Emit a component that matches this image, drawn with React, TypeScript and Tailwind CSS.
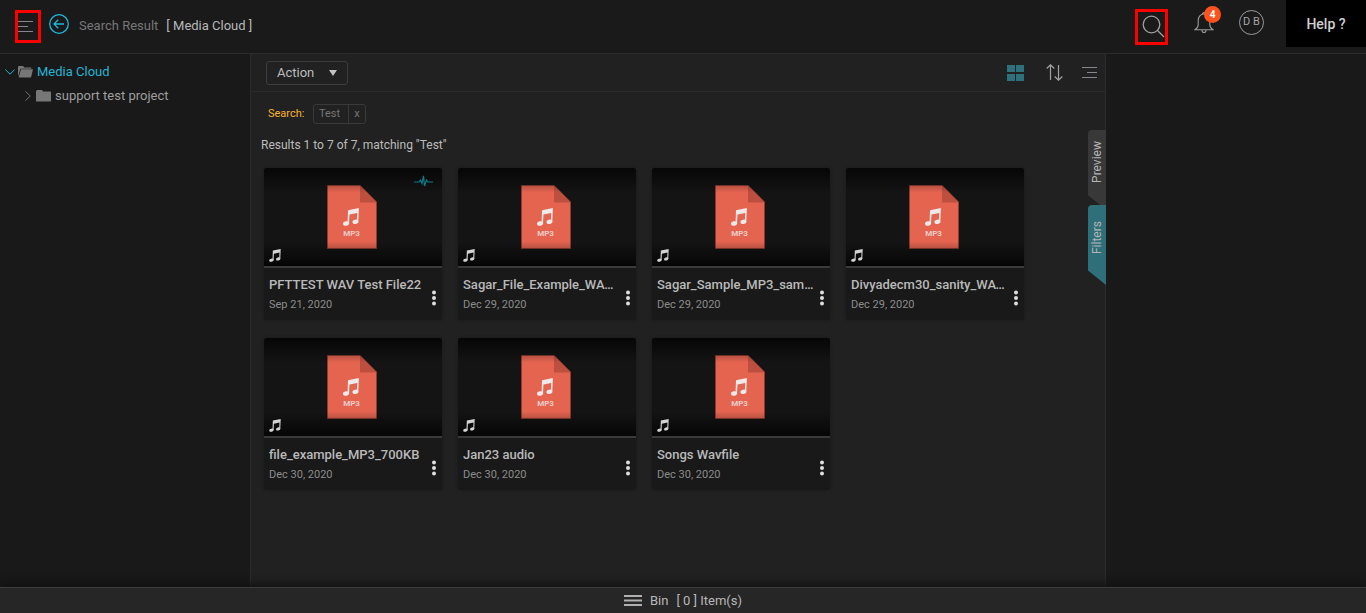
import React from 'react';

type Asset = { title: string; date: string; live?: boolean };

const assets: Asset[] = [
  { title: 'PFTTEST WAV Test File22', date: 'Sep 21, 2020', live: true },
  { title: 'Sagar_File_Example_WAV_1MG', date: 'Dec 29, 2020' },
  { title: 'Sagar_Sample_MP3_sample_file', date: 'Dec 29, 2020' },
  { title: 'Divyadecm30_sanity_WAV_file', date: 'Dec 29, 2020' },
  { title: 'file_example_MP3_700KB', date: 'Dec 30, 2020' },
  { title: 'Jan23 audio', date: 'Dec 30, 2020' },
  { title: 'Songs Wavfile', date: 'Dec 30, 2020' },
];

function NoteShape() {
  return (
    <>
      <path d="M5 2.200 15.900 0l-.6 13.800h-1.500L14.200 5 6.500 6.600l-.5 8.800H4.500z" />
      <ellipse cx="3.100" cy="15.500" rx="3.100" ry="2.200" transform="rotate(-12 3.100 15.500)" />
      <ellipse cx="12.400" cy="13.800" rx="3" ry="2.200" transform="rotate(-12 12.400 13.800)" />
    </>
  );
}

function Mp3Icon() {
  return (
    <svg width="52" height="64" viewBox="0 0 52 64" aria-hidden="true">
      <path d="M.5.5H33L49.500 17V63.500H.5z" fill="#e46450" stroke="#8e3c30" strokeWidth="1" />
      <path d="M33 .5 49.500 17.500H33z" fill="#bd4f3f" />
      <g transform="translate(16 23)" fill="#eeeaea">
        <NoteShape />
      </g>
      <text x="24.500" y="50.500" textAnchor="middle" fill="#f0cdc8" className="font-['Roboto'] text-[8px] font-bold">
        MP3
      </text>
    </svg>
  );
}

function Card({ asset }: { asset: Asset }) {
  return (
    <article className="overflow-hidden rounded-[3px] bg-[#191919] shadow-[0_0_3px_#181818]">
      <div className="relative flex h-[100px] items-center justify-center border-b-2 border-[#3a3a3a] bg-[#141414]">
        <Mp3Icon />
        <div className="absolute inset-0 bg-linear-to-b from-black/70 via-transparent via-25% to-transparent" />
        <div className="absolute inset-0 bg-linear-to-t from-black/70 via-transparent via-25% to-transparent" />
        <svg className="absolute bottom-1 left-[5px]" width="12" height="13" viewBox="0 0 16 18" fill="#d4d4d4" aria-hidden="true">
          <NoteShape />
        </svg>
        {asset.live && (
          <svg className="absolute top-[7px] right-[9px]" width="19" height="12" viewBox="0 0 19 12" fill="none" stroke="#0c7c88" strokeWidth="1.200" aria-hidden="true">
            <path d="M0 7h5l1.500-2 1.500 3.500L9.500.8 10.500 11l2-6 1.500 2h5" />
          </svg>
        )}
      </div>
      <div className="flex h-[52px] pl-[5px]">
        <div className="min-w-0 flex-1 pt-[9px]">
          <h3 className="truncate text-[13px] leading-4 font-medium text-[#b9b9b9]">{asset.title}</h3>
          <p className="mt-1 text-[11px] leading-4 text-[#8c8c8c]">{asset.date}</p>
        </div>
        <button type="button" aria-label={`Options for ${asset.title}`} className="flex w-4 shrink-0 justify-center pt-[22px]">
          <svg width="4" height="16" viewBox="0 0 4 16" fill="#dedede" aria-hidden="true">
            <circle cx="2" cy="2.500" r="2" />
            <circle cx="2" cy="8" r="2" />
            <circle cx="2" cy="13.500" r="2" />
          </svg>
        </button>
      </div>
    </article>
  );
}

function Header() {
  return (
    <header className="flex h-[54px] items-start border-b border-[#2c2c2c] bg-[#1a1a1a]">
      <button type="button" aria-label="Menu" className="mt-[10px] ml-[15px] flex h-[33px] w-[26px] items-center border-3 border-[#ff0000]">
        <svg className="shrink-0" width="15" height="11" viewBox="0 0 15 11" stroke="#85868f" aria-hidden="true">
          <path d="M0 .5h15M0 5.500h10M0 10.500h15" />
        </svg>
      </button>
      <button type="button" aria-label="Back" className="mt-[14px] ml-2">
        <svg width="20" height="20" viewBox="0 0 20 20" fill="none" stroke="#1cb9dc" aria-hidden="true">
          <circle cx="10" cy="10" r="9.300" strokeWidth="1.300" />
          <path d="M15 10H5M9.200 5.800 5 10l4.200 4.200" strokeWidth="1.300" />
        </svg>
      </button>
      <div className="mt-4 ml-[10px] flex gap-2 text-[13px] leading-5">
        <span className="text-[#777]">Search Result</span>
        <span className="text-[#b8b8b8]">[ Media Cloud ]</span>
      </div>
      <button type="button" aria-label="Search" className="mt-[9px] ml-auto flex h-9 w-[33px] justify-end border-3 border-[#ff0000] pt-[3px]">
        <svg className="shrink-0" width="23" height="23" viewBox="0 0 23 23" fill="none" stroke="#a0a0a0" strokeWidth="1.300" aria-hidden="true">
          <circle cx="9.500" cy="9.500" r="8.300" />
          <path d="m15.500 15.500 6.500 6.500" />
        </svg>
      </button>
      <button type="button" aria-label="Notifications, 4 new" className="relative mt-3 ml-[26px]">
        <svg width="20" height="22" viewBox="0 0 20 22" fill="none" stroke="#9a9a9a" strokeWidth="1.100" aria-hidden="true">
          <path d="M1 17.800c1.800-1.200 3.200-2.500 3.200-5V8.500C4.200 5 6.500 2 10 2s5.800 3 5.800 6.500v4.300c0 2.500 1.400 3.800 3.200 5zM8 18.300c0 3 4 3 4 0M8.500 2c0-1.800 3-1.800 3 0" />
        </svg>
        <span className="absolute -top-[6px] left-[10px] flex size-[17px] items-center justify-center rounded-full bg-[#ff521d] text-[10px] font-bold text-white">4</span>
      </button>
      <button type="button" aria-label="Account" className="mt-[10px] ml-[25px] flex size-[25px] items-center justify-center rounded-full border border-[#9a9a9a] text-[11px] text-[#a5a5a5]">
        D B
      </button>
      <button type="button" className="ml-[22px] h-[47px] w-20 bg-black text-sm font-medium text-[#d2d2d2]">Help ?</button>
    </header>
  );
}

function Sidebar() {
  return (
    <nav aria-label="Projects" className="w-[251px] shrink-0 border-r border-[#2c2c2c] bg-[#191919] pt-[6px] text-[13px] leading-6">
      <a href="#media-cloud" className="flex items-center pl-[5px] text-[#25b4d3]">
        <svg width="10" height="6" viewBox="0 0 10 6" fill="none" stroke="currentColor" aria-hidden="true">
          <path d="m.3.5 4.700 4.700L9.700.5" />
        </svg>
        <svg className="mr-1 ml-[3px]" width="15" height="12" viewBox="0 0 15 12" fill="#777" aria-hidden="true">
          <path d="M0 10.500V.8L.8 0h4.400l1 1.500h7v1.300H2.500z" />
          <path d="M3 3.300h12l-2 8.200H.6z" />
        </svg>
        Media Cloud
      </a>
      <a href="#support-test-project" className="flex items-center pl-[25px] text-[#9e9e9e]">
        <svg width="6" height="10" viewBox="0 0 6 10" fill="none" stroke="#737373" aria-hidden="true">
          <path d="M.5.3 5.200 5 .5 9.700" />
        </svg>
        <svg className="mr-1 ml-[5px]" width="15" height="12" viewBox="0 0 15 12" fill="#777" aria-hidden="true">
          <path d="M0 11.500V1l1-1h5l1 1.500h7.500l.5.500v9.500z" />
        </svg>
        support test project
      </a>
    </nav>
  );
}

function Toolbar() {
  return (
    <div className="flex h-[38px] items-center border-b border-[#2a2a2a] pr-2 pl-[15px]">
      <button type="button" className="flex h-6 w-[82px] items-center justify-between rounded-[3px] border border-[#3c3c3c] px-[10px] text-[13px] text-[#bcbcbc]">
        Action
        <svg width="8" height="6" viewBox="0 0 8 6" fill="#c2c2c2" aria-hidden="true">
          <path d="M0 0h8L4 6z" />
        </svg>
      </button>
      <button type="button" aria-label="Grid view" className="ml-auto">
        <svg width="17" height="16" viewBox="0 0 17 16" fill="#2e707b" aria-hidden="true">
          <path d="M0 0h8v7H0zM9 0h8v7H9zM0 9h8v7H0zM9 9h8v7H9z" />
        </svg>
      </button>
      <button type="button" aria-label="Sort" className="ml-[22px]">
        <svg width="17" height="17" viewBox="0 0 17 17" fill="none" stroke="#a2a2a2" strokeWidth="1.200" aria-hidden="true">
          <path d="M4.500 16V1M.7 4.500 4.500.8l3.800 3.700M12.500 1v15M8.700 12.500l3.800 3.700 3.800-3.700" />
        </svg>
      </button>
      <button type="button" aria-label="List options" className="ml-[18px]">
        <svg width="16" height="12" viewBox="0 0 16 12" stroke="#85868f" aria-hidden="true">
          <path d="M1 .5h15M6 5.500h10M1 10.500h15" />
        </svg>
      </button>
    </div>
  );
}

function SideTabs() {
  return (
    <div className="absolute top-[76px] -right-px flex flex-col text-xs leading-[18px] text-[#b5b5b5]">
      <button type="button" className="flex h-[75px] w-[18px] items-start justify-center rounded-tl-[4px] bg-[#383838] pt-[11px] [clip-path:polygon(0_0,100%_0,100%_100%,68%_100%,0_87%)]">
        <span className="rotate-180 [writing-mode:vertical-rl]">Preview</span>
      </button>
      <button type="button" className="flex h-20 w-[18px] items-start justify-center rounded-tl-[4px] bg-[#2e6f7a] pt-4 [clip-path:polygon(0_0,100%_0,100%_100%,0_82%)]">
        <span className="rotate-180 [writing-mode:vertical-rl]">Filters</span>
      </button>
    </div>
  );
}

export default function App() {
  return (
    <div className="flex min-h-screen flex-col bg-[#191919] font-['Roboto',sans-serif]">
      <Header />
      <div className="flex flex-1">
        <Sidebar />
        <main className="relative min-w-0 flex-1 border-r border-[#2c2c2c] bg-[#212121]">
          <Toolbar />
          <div className="mt-3 flex items-center pl-[17px] text-[11px]">
            <span className="w-[37px] text-[#f9b52a]">Search:</span>
            <div className="ml-2 flex h-5 rounded-[3px] border border-[#393939] text-[#777]">
              <span className="flex w-[34px] items-center pl-[5px]">Test</span>
              <button type="button" aria-label="Remove Test" className="w-[17px] border-l border-[#393939]">x</button>
            </div>
          </div>
          <p className="mt-3 pl-[10px] text-xs leading-[18px] text-[#bcbcbc]">Results 1 to 7 of 7, matching "Test"</p>
          <section aria-label="Results" className="mt-[14px] grid grid-cols-[repeat(auto-fill,178px)] gap-x-4 gap-y-[18px] pr-10 pb-12 pl-[13px]">
            {assets.map((asset) => (
              <Card key={asset.title} asset={asset} />
            ))}
          </section>
          <SideTabs />
        </main>
        <aside className="w-[260px] shrink-0 bg-[#191919]" />
      </div>
      <footer className="relative flex h-[26px] items-center justify-center border-t border-[#3c3c3c] bg-[#262626] text-[13px] text-[#b8b8b8] shadow-[0_-3px_10px_#101010]">
        <button type="button" className="flex items-center gap-2">
          <svg width="18" height="11" viewBox="0 0 18 11" stroke="#b0b0b0" strokeWidth="2" aria-hidden="true">
            <path d="M0 1h18M0 5.500h18M0 10h18" />
          </svg>
          <span>Bin</span>
          <span>[ 0 ] Item(s)</span>
        </button>
      </footer>
    </div>
  );
}
